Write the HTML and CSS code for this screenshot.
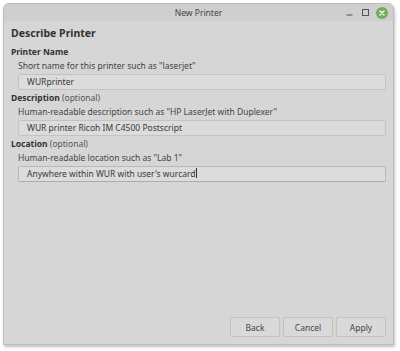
FILE: index.html
```html
<!DOCTYPE html>
<html>
<head>
<meta charset="utf-8">
<link rel="stylesheet" href="styles.css">
</head>
<body>
<div class="window">
  <div class="titlebar">
    <span class="title">New Printer</span>
    <div class="controls">
      <span class="ctl min"><svg width="7" height="7" viewBox="0 0 7 7"><path d="M0.5 6 H6.5" stroke="#555" stroke-width="1"/></svg></span>
      <span class="ctl max"><svg width="7" height="7" viewBox="0 0 7 7"><rect x="0.5" y="0.5" width="6" height="6" fill="none" stroke="#555" stroke-width="1"/></svg></span>
      <span class="ctl close"><svg width="12" height="12" viewBox="0 0 12 12"><circle cx="6" cy="6" r="6" fill="#72ad55"/><path d="M4 4 L8 8 M8 4 L4 8" stroke="#fff" stroke-width="1.4" stroke-linecap="round"/></svg></span>
    </div>
  </div>
  <div class="content">
    <h1 class="heading">Describe Printer</h1>
    <div class="field">
      <div class="label"><b>Printer Name</b></div>
      <div class="hint">Short name for this printer such as "laserjet"</div>
      <div class="entry">WURprinter</div>
    </div>
    <div class="field">
      <div class="label"><b>Description</b> (optional)</div>
      <div class="hint">Human-readable description such as "HP LaserJet with Duplexer"</div>
      <div class="entry">WUR printer Ricoh IM C4500 Postscript</div>
    </div>
    <div class="field">
      <div class="label"><b>Location</b> (optional)</div>
      <div class="hint">Human-readable location such as "Lab 1"</div>
      <div class="entry focus">Anywhere within WUR with user's wurcard<span class="caret"></span></div>
    </div>
    <div class="spacer"></div>
    <div class="buttons">
      <button class="btn">Back</button>
      <button class="btn">Cancel</button>
      <button class="btn">Apply</button>
    </div>
  </div>
</div>
</body>
</html>
```
FILE: styles.css
```css
html, body {
  margin: 0;
  padding: 0;
  background: #ffffff;
}
body {
  padding: 3px 6px 6px 3px;
  font-family: "Noto Sans", "DejaVu Sans", sans-serif;
  font-size: 8.5px;
  color: #3c3c3c;
}
.window {
  width: 391px;
  height: 342px;
  box-sizing: border-box;
  background: #d6d6d6;
  border: 1px solid #bdbdbd;
  border-radius: 6px 6px 0 0;
  box-shadow: 1px 2px 3px rgba(0,0,0,0.25);
  display: flex;
  flex-direction: column;
  overflow: hidden;
}
.titlebar {
  height: 17px;
  background: #cfcfcf;
  position: relative;
  display: flex;
  align-items: center;
  justify-content: center;
  flex-shrink: 0;
}
.title {
  font-size: 8.5px;
  color: #444;
}
.controls {
  position: absolute;
  right: 4px;
  top: 2px;
  display: flex;
  align-items: center;
  height: 13px;
}
.ctl {
  display: flex;
  align-items: center;
  justify-content: center;
  width: 16px;
  height: 13px;
}
.ctl.close { width: 14px; margin-left: 2px; }
.content {
  flex: 1;
  display: flex;
  flex-direction: column;
  padding: 5px 7px 7px 7px;
}
.heading {
  margin: 0 0 6px 0;
  font-size: 10.5px;
  font-weight: bold;
  color: #333;
  line-height: 14px;
}
.field {
  display: flex;
  flex-direction: column;
}
.label {
  line-height: 12px;
  color: #555;
}
.label b { color: #333; }
.hint {
  margin: 1px 0 0 7px;
  line-height: 14px;
  color: #444;
}
.entry {
  margin: 1px 0 2px 7px;
  height: 16px;
  box-sizing: border-box;
  border: 1px solid #c3c3c3;
  background: #dcdcdc;
  border-radius: 2px;
  padding: 0 8px;
  line-height: 14px;
  color: #3a3a3a;
}
.entry.focus {
  border-color: #b4bdae;
  border-bottom-color: #a3b69a;
}
.caret {
  display: inline-block;
  width: 1px;
  height: 10px;
  background: #333;
  vertical-align: -1px;
}
.spacer { flex: 1; }
.buttons {
  display: flex;
  justify-content: flex-end;
  gap: 3px;
}
.btn {
  width: 50px;
  height: 20px;
  font-family: inherit;
  font-size: 8.5px;
  color: #444;
  background: #d9d9d9;
  border: 1px solid #c2c2c2;
  border-radius: 2px;
  padding: 0;
}
```
